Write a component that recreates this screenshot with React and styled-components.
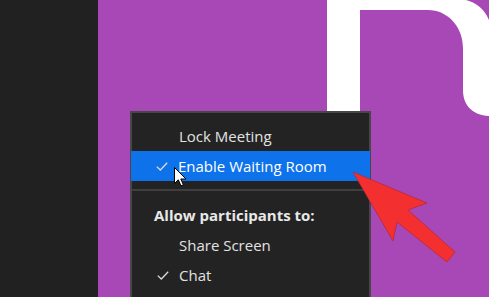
import React from "react";
import styled, { createGlobalStyle } from "styled-components";

const GlobalStyle = createGlobalStyle`
  html, body {
    margin: 0;
    padding: 0;
    background: #212121;
  }
  body {
    font-family: "Open Sans", "Noto Sans", "Liberation Sans", sans-serif;
  }
`;

const Stage = styled.div`
  display: flex;
  width: 489px;
  height: 297px;
  overflow: hidden;
  position: relative;
`;

const SideStrip = styled.div`
  width: 98px;
  flex-shrink: 0;
  background: #212121;
`;

const Canvas = styled.div`
  flex: 1;
  position: relative;
  background: #a847b6;
`;

const Backdrop = styled.svg`
  position: absolute;
  left: 0;
  top: 0;
  width: 391px;
  height: 297px;
`;

const Menu = styled.div`
  position: absolute;
  left: 32px;
  top: 111px;
  width: 237px;
  height: 200px;
  background: #232323;
  border: 2px solid #474747;
  padding-top: 8px;
  display: flex;
  flex-direction: column;
`;

const Item = styled.div`
  display: flex;
  align-items: center;
  height: 30px;
  padding-left: 25px;
  font-size: 15px;
  color: ${(p) => (p.active ? "#ffffff" : "#e2e2e2")};
  background: ${(p) => (p.active ? "#0e72eb" : "transparent")};
  margin: 0 ${(p) => (p.active ? "-1px" : "0")};
`;

const CheckSlot = styled.span`
  width: 22px;
  display: flex;
  align-items: center;
`;

const Divider = styled.div`
  height: 2px;
  background: #3f3f3f;
  margin: 8px 0 9px;
`;

const Header = styled.div`
  display: flex;
  align-items: center;
  height: 30px;
  padding-left: 22px;
  font-size: 15px;
  font-weight: 700;
  color: #e8e8e8;
`;

const Pointer = styled.svg`
  position: absolute;
  left: 76px;
  top: 167px;
  width: 13px;
  height: 20px;
`;

const Overlay = styled.svg`
  position: absolute;
  left: 0;
  top: 0;
  width: 391px;
  height: 297px;
  pointer-events: none;
`;

function Check() {
  return (
    <svg width="12" height="9" viewBox="0 0 12 9">
      <polyline
        points="0.8,4.6 4.3,8 11.2,0.8"
        fill="none"
        stroke="#dcdcdc"
        strokeWidth="1.3"
      />
    </svg>
  );
}

const items = [
  { label: "Lock Meeting", checked: false },
  { label: "Enable Waiting Room", checked: true, active: true },
];

const perms = [
  { label: "Share Screen", checked: false },
  { label: "Chat", checked: true },
];

export default function App() {
  return (
    <>
      <GlobalStyle />
      <Stage>
        <SideStrip />
        <Canvas>
          <Backdrop viewBox="98 0 391 297">
            <path
              d="M327,0 H466 Q482,4 489,20 V116 C472,115 463,105 463,90 V48 C463,26 447,10 428,10 H360 V297 H327 Z"
              fill="#ffffff"
            />
          </Backdrop>
          <Menu>
            {items.map((it) => (
              <Item key={it.label} active={it.active}>
                <CheckSlot>{it.checked && <Check />}</CheckSlot>
                {it.label}
              </Item>
            ))}
            <Divider />
            <Header>Allow participants to:</Header>
            {perms.map((it) => (
              <Item key={it.label}>
                <CheckSlot>{it.checked && <Check />}</CheckSlot>
                {it.label}
              </Item>
            ))}
          </Menu>
          <Pointer viewBox="0 0 13 20">
            <path
              d="M0.5,0.5 V16.5 L4.3,12.8 L7,18.8 L9.4,17.8 L6.8,12 H12 Z"
              fill="#ffffff"
              stroke="#000000"
              strokeWidth="1"
              strokeLinejoin="round"
            />
          </Pointer>
          <Overlay viewBox="98 0 391 297">
            <polygon
              points="353,172 427,203 408,210 455,252 447,262 397,222 393,241"
              fill="#f42f2f"
              stroke="#b82a3a"
              strokeWidth="0.8"
              strokeLinejoin="round"
            />
          </Overlay>
        </Canvas>
      </Stage>
    </>
  );
}
